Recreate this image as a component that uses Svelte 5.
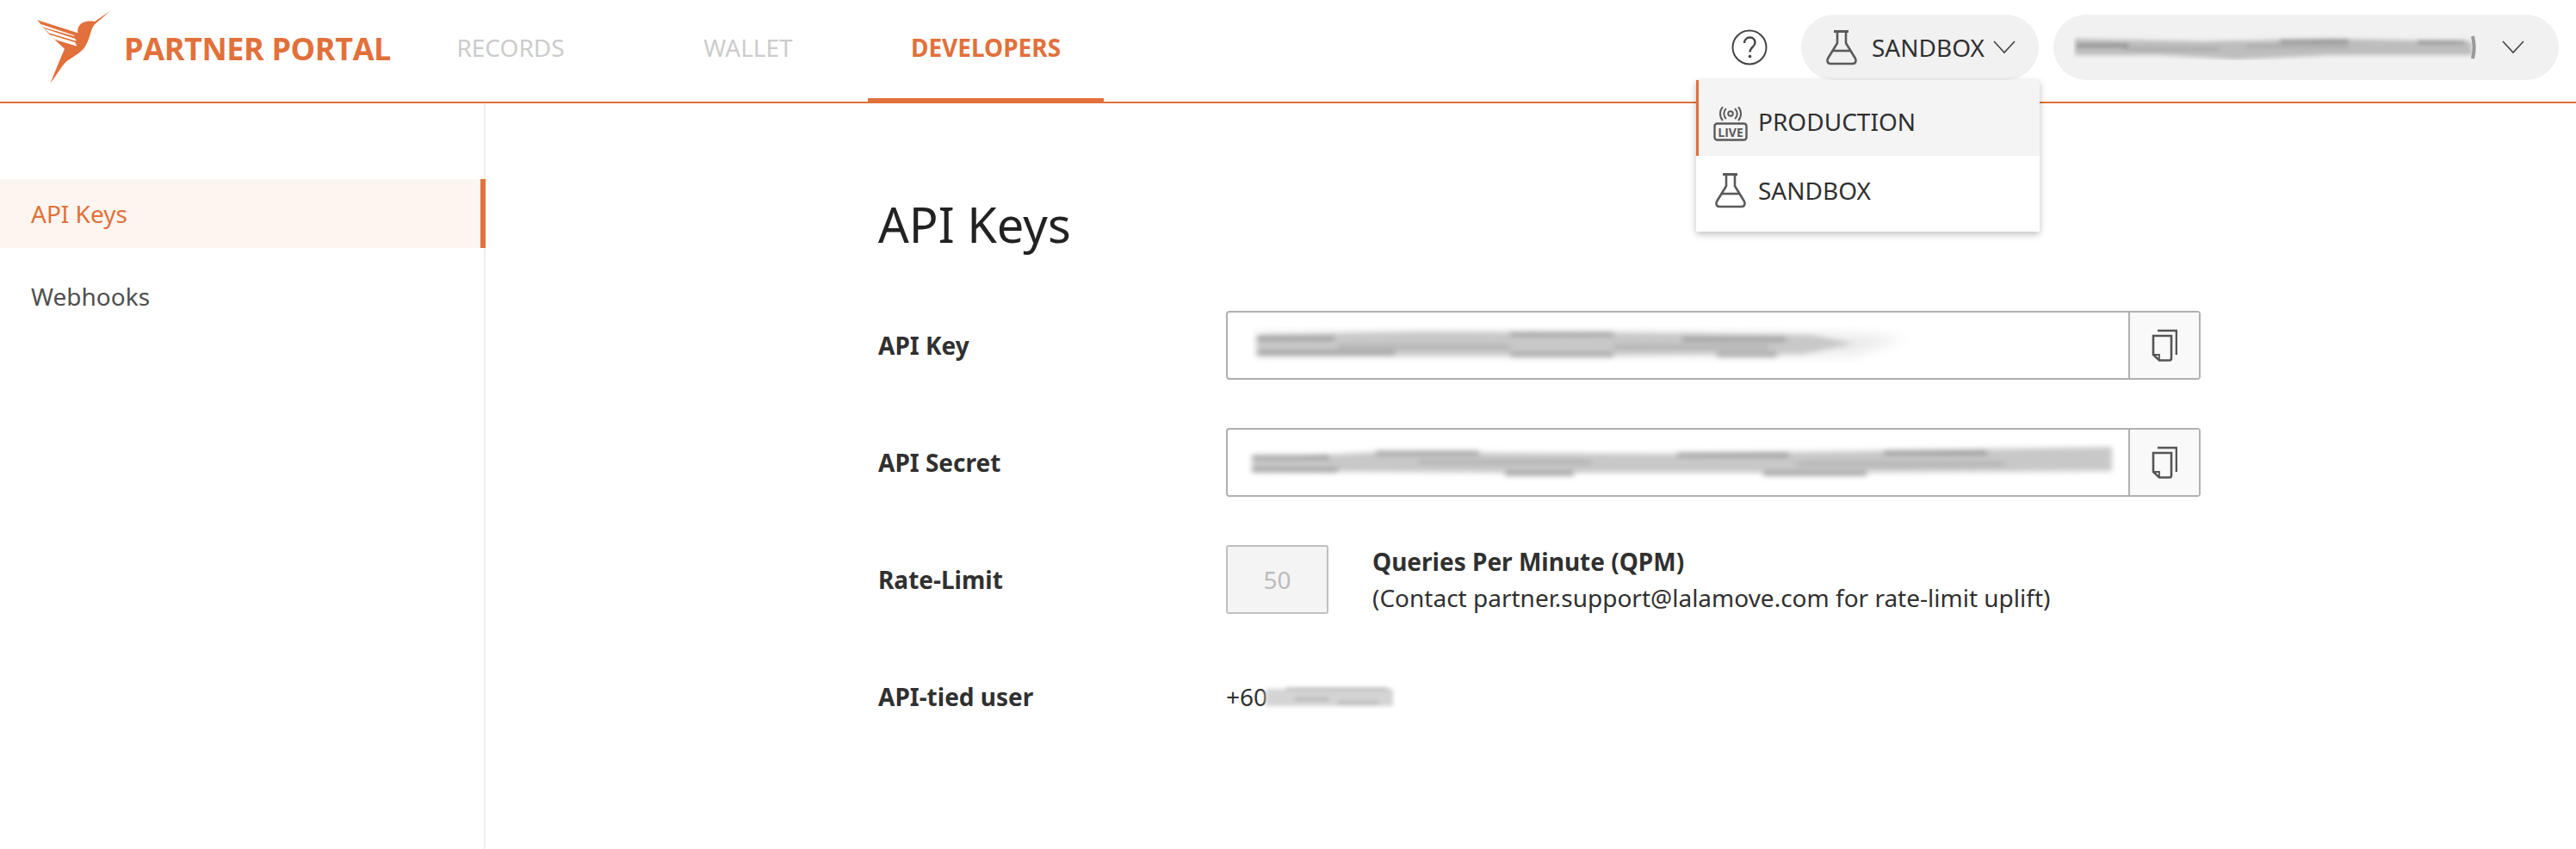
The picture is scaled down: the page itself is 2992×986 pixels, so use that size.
<script>
	const tabs = [
		{ label: 'RECORDS', active: false },
		{ label: 'WALLET', active: false },
		{ label: 'DEVELOPERS', active: true }
	];
	const sideItems = [
		{ label: 'API Keys', active: true },
		{ label: 'Webhooks', active: false }
	];
</script>

{#snippet flask(cls)}
	<svg class={cls} viewBox="0 0 38 42" fill="none" stroke="#5a5a5a" stroke-width="2.600" stroke-linejoin="round">
		<path d="M10 2.500h17" stroke-width="3" />
		<path d="M14 3v13L3 34c-1.500 3 0 6 3 6h26c3 0 4.500-3 3-6L24 16V3" />
		<path d="M8 25h22" />
	</svg>
{/snippet}

{#snippet chevron()}
	<svg class="chevron" viewBox="0 0 26 16" fill="none" stroke="#444" stroke-width="1.600">
		<path d="M1 1l12 13L25 1" />
	</svg>
{/snippet}

{#snippet copyIcon()}
	<svg class="copy-icon" viewBox="0 0 30 38" fill="none" stroke="#555" stroke-width="2.600">
		<path d="M7 2h22v28" />
		<path d="M2 8h21v26c0 1.500-.7 2.500-2 2.500H9L2 30z" />
		<path d="M3 30h6v6" stroke-width="1.800" />
	</svg>
{/snippet}

<div class="page">
	<header class="topbar">
		<div class="brand">
			<svg class="logo" viewBox="0 0 330 300">
				<path fill="#e2703a" d="M296 22 240 60C220 56 195 60 186 75 180 85 180 92 181 100L40 55 62 82 80 103 103 125 135 155 118 195 85 275C105 250 125 215 140 200 160 185 190 170 205 150 225 120 225 85 240 70z" />
				<path fill="#fff" d="M50 68 168 108 170 112 62 80zM66 85 172 120 176 128 80 100zM84 106 172 133 178 146 100 122z" />
			</svg>
			<span class="brand-name">PARTNER PORTAL</span>
		</div>
		<nav class="tabs">
			{#each tabs as tab}
				<button class="tab" class:active={tab.active}>{tab.label}</button>
			{/each}
		</nav>
		<div class="actions">
			<svg class="help" viewBox="0 0 42 42" fill="none" stroke="#444" stroke-width="2">
				<circle cx="21" cy="21" r="19.500" />
				<path d="M15 16c0-4 3-6.500 6.500-6.500S27.500 12 27.500 15.500c0 5-6 5.500-6 11" stroke-width="2.400" />
				<circle cx="21.500" cy="31.500" r="1.800" fill="#444" stroke="none" />
			</svg>
			<div class="pill env">
				{@render flask('flask')}
				<span>SANDBOX</span>
				{@render chevron()}
			</div>
			<div class="pill account">
				<svg class="smear account-smear" viewBox="0 0 470 30">
					<defs>
						<filter id="b1" x="-5%" y="-50%" width="110%" height="200%"><feGaussianBlur stdDeviation="2.500" /></filter>
					</defs>
					<g filter="url(#b1)">
						<path fill="#bdbdbd" d="M2 5 L150 8 L300 5 L462 8 L464 24 L300 24 L190 29 L100 24 L2 24z" />
						<path stroke="#666" stroke-width="2.500" fill="none" d="M4 13h60M240 8h80M400 9h55" />
						<path stroke="#999" stroke-width="2" fill="none" d="M60 17h110M200 14h120" />
					</g>
					<path stroke="#999" stroke-width="4" fill="none" d="M464 2c2 8 2 18 0 26" />
				</svg>
				{@render chevron()}
			</div>
			<div class="menu">
				<div class="menu-item selected">
					<svg class="live" viewBox="0 0 40 40" fill="none" stroke="#5a5a5a" stroke-width="2">
						<circle cx="20" cy="8" r="2.800" />
						<path d="M15 2a8 8 0 0 0 0 12M25 2a8 8 0 0 1 0 12M11 0a12 12 0 0 0 0 16M29 0a12 12 0 0 1 0 16" />
						<rect x="1.500" y="19.500" width="37" height="19" rx="3" stroke-width="2.400" />
						<text class="live-text" x="20" y="34.500" text-anchor="middle">LIVE</text>
					</svg>
					<span>PRODUCTION</span>
				</div>
				<div class="menu-item second">
					{@render flask('flask')}
					<span>SANDBOX</span>
				</div>
			</div>
		</div>
	</header>

	<div class="body">
		<aside class="sidebar">
			{#each sideItems as item}
				<div class="side-item" class:active={item.active}>{item.label}</div>
			{/each}
		</aside>
		<main class="content">
			<h1>API Keys</h1>
			<div class="row">
				<div class="label">API Key</div>
				<div class="field">
					<div class="field-value">
						<svg class="smear key-smear" viewBox="0 0 770 44">
							<defs>
								<filter id="b2" x="-5%" y="-50%" width="110%" height="200%"><feGaussianBlur stdDeviation="3" /></filter>
								<filter id="b3" x="-5%" y="-50%" width="110%" height="200%"><feGaussianBlur stdDeviation="7" /></filter>
							</defs>
							<path fill="#ececec" filter="url(#b3)" d="M6 8H700L760 14 700 34H6z" />
							<g filter="url(#b2)">
								<path fill="#c8c8c8" d="M6 10 L200 6 L500 8 L650 10 L700 20 L640 32 L300 34 L6 34z" />
								<path stroke="#777" stroke-width="3" fill="none" d="M6 14h90M300 9h120M500 15h120M6 31h160M300 33h120M540 33h70" />
								<path stroke="#999" stroke-width="2.500" fill="none" d="M100 24h200M420 24h180" />
							</g>
						</svg>
					</div>
					<button class="copy">{@render copyIcon()}</button>
				</div>
			</div>
			<div class="row">
				<div class="label">API Secret</div>
				<div class="field">
					<div class="field-value">
						<svg class="smear secret-smear" viewBox="0 0 1010 44">
							<g filter="url(#b2)">
								<path fill="#c8c8c8" d="M6 18 L150 10 L500 12 L1005 4 L1005 32 L700 34 L300 34 L6 32z" />
								<path stroke="#666" stroke-width="3" fill="none" d="M6 16h90M150 11h120M500 13h130M740 11h120M6 31h100M300 35h80M600 35h120" />
								<path stroke="#999" stroke-width="2.500" fill="none" d="M200 22h200M640 24h240" />
							</g>
						</svg>
					</div>
					<button class="copy">{@render copyIcon()}</button>
				</div>
			</div>
			<div class="row">
				<div class="label">Rate-Limit</div>
				<div class="rate">50</div>
				<div class="rate-text">
					<strong>Queries Per Minute (QPM)</strong>
					<span>(Contact partner.support@lalamove.com for rate-limit uplift)</span>
				</div>
			</div>
			<div class="row user-row">
				<div class="label">API-tied user</div>
				<div class="user">
					<span>+60</span>
					<svg class="smear phone-smear" viewBox="0 0 164 30">
						<g filter="url(#b1)">
							<path fill="#d4d4d4" d="M12 6h148v20H12z" />
							<path stroke="#999" stroke-width="2" fill="none" d="M36 6h118M46 18h40M96 22h48" />
						</g>
					</svg>
				</div>
			</div>
		</main>
	</div>
</div>

<style>
	:global(body) {
		background: #fff;
		font-family: "Noto Sans", sans-serif;
		color: #303030;
	}

	.page {
		width: 2992px;
		height: 986px;
		overflow: hidden;
		display: flex;
		flex-direction: column;
	}

	.topbar {
		height: 118px;
		flex: none;
		display: flex;
		align-items: stretch;
		border-bottom: 2px solid #e2703a;
		padding: 0 20px 0 30px;
	}

	.brand {
		display: flex;
		align-items: center;
		gap: 4px;
		width: 493px;
		flex: none;
	}

	.logo {
		width: 110px;
		height: 100px;
		margin-top: -8px;
	}

	.brand-name {
		font-family: "Open Sans", sans-serif;
		font-weight: 700;
		font-size: 36px;
		color: #e2703a;
		letter-spacing: -0.4px;
		margin-top: -6px;
	}

	.tabs {
		display: flex;
		margin-left: -67px;
	}

	.tab {
		width: 274px;
		margin-right: 2px;
		border: none;
		background: none;
		font: inherit;
		font-size: 28px;
		color: #ccc;
		padding: 0 0 4px;
		border-bottom: 4px solid transparent;
	}

	.tab.active {
		color: #e2703a;
		font-weight: 700;
		border-bottom-color: #e2703a;
	}

	.actions {
		margin-left: auto;
		display: flex;
		align-items: center;
		position: relative;
		height: 76px;
		margin-top: 17px;
	}

	.help {
		width: 42px;
		height: 42px;
		margin-right: 39px;
	}

	.pill {
		height: 76px;
		background: #f1f1f1;
		border-radius: 38px;
		display: flex;
		align-items: center;
	}

	.env {
		width: 276px;
		padding-left: 28px;
		box-sizing: border-box;
		font-size: 28px;
		color: #303030;
		margin-right: 17px;
	}

	.env span {
		margin-left: 16px;
		margin-right: 10px;
	}

	.flask {
		width: 38px;
		height: 42px;
		flex: none;
	}

	.chevron {
		width: 26px;
		height: 16px;
		flex: none;
	}

	.account {
		width: 587px;
		box-sizing: border-box;
		padding-left: 23px;
	}

	.smear {
		display: block;
		flex: none;
	}

	.account-smear {
		width: 470px;
		height: 30px;
		margin-right: 28px;
	}

	.menu {
		position: absolute;
		top: 76px;
		left: -41px;
		width: 399px;
		background: #fff;
		box-shadow: 0 3px 8px rgba(0, 0, 0, 0.25);
		z-index: 5;
	}

	.menu-item {
		height: 88px;
		display: flex;
		align-items: center;
		padding-left: 21px;
		gap: 13px;
		font-size: 28px;
		color: #303030;
		box-sizing: border-box;
	}

	.menu-item.selected {
		background: #f4f4f4;
		border-left: 3px solid #e2703a;
		padding-left: 17px;
		padding-top: 8px;
		gap: 12px;
	}

	.menu-item.second {
		padding-bottom: 8px;
	}

	.live {
		width: 40px;
		height: 40px;
		flex: none;
		margin-top: 6px;
	}

	.live-text {
		font-family: "Open Sans", sans-serif;
		font-weight: 700;
		font-size: 14px;
		fill: #5a5a5a;
		stroke: none;
	}

	.body {
		flex: 1;
		display: flex;
		min-height: 0;
	}

	.sidebar {
		width: 564px;
		flex: none;
		box-sizing: border-box;
		border-right: 2px solid #f0f0f0;
		padding-top: 88px;
	}

	.side-item {
		height: 80px;
		margin-bottom: 16px;
		padding-left: 36px;
		display: flex;
		align-items: center;
		font-size: 28px;
		color: #505050;
		margin-right: -2px;
	}

	.side-item.active {
		background: #fdf5f0;
		color: #e2703a;
		border-right: 6px solid #e2703a;
	}

	.content {
		padding: 108px 0 0 456px;
		flex: 1;
	}

	h1 {
		margin: 0 0 67px;
		font-size: 56px;
		line-height: 64px;
		font-weight: 400;
		color: #222;
		height: 66px;
	}

	.row {
		display: flex;
		align-items: center;
		height: 80px;
		margin-bottom: 56px;
	}

	.label {
		width: 404px;
		flex: none;
		font-size: 28px;
		font-weight: 700;
		color: #303030;
	}

	.field {
		width: 1132px;
		height: 80px;
		box-sizing: border-box;
		border: 2px solid #b0b0b0;
		border-radius: 4px;
		display: flex;
	}

	.field-value {
		flex: 1;
		display: flex;
		align-items: center;
		overflow: hidden;
	}

	.key-smear {
		width: 770px;
		height: 44px;
		margin-left: 28px;
	}

	.secret-smear {
		width: 1010px;
		height: 44px;
		margin-left: 22px;
	}

	.copy {
		width: 82px;
		flex: none;
		border: none;
		border-left: 2px solid #b0b0b0;
		background: #f9f9f9;
		padding: 0;
		display: flex;
		align-items: center;
		justify-content: center;
	}

	.copy-icon {
		width: 30px;
		height: 38px;
	}

	.rate {
		width: 119px;
		height: 80px;
		box-sizing: border-box;
		border: 2px solid #c0c0c0;
		border-radius: 3px;
		background: #f4f4f4;
		color: #bbb;
		font-size: 28px;
		display: flex;
		align-items: center;
		justify-content: center;
		flex: none;
	}

	.rate-text {
		margin-left: 51px;
		display: flex;
		flex-direction: column;
		font-size: 28px;
		line-height: 42px;
	}

	.rate-text strong {
		font-weight: 700;
	}

	.user {
		display: flex;
		align-items: center;
		font-size: 28px;
	}

	.phone-smear {
		width: 164px;
		height: 30px;
		margin-left: -14px;
	}
</style>
